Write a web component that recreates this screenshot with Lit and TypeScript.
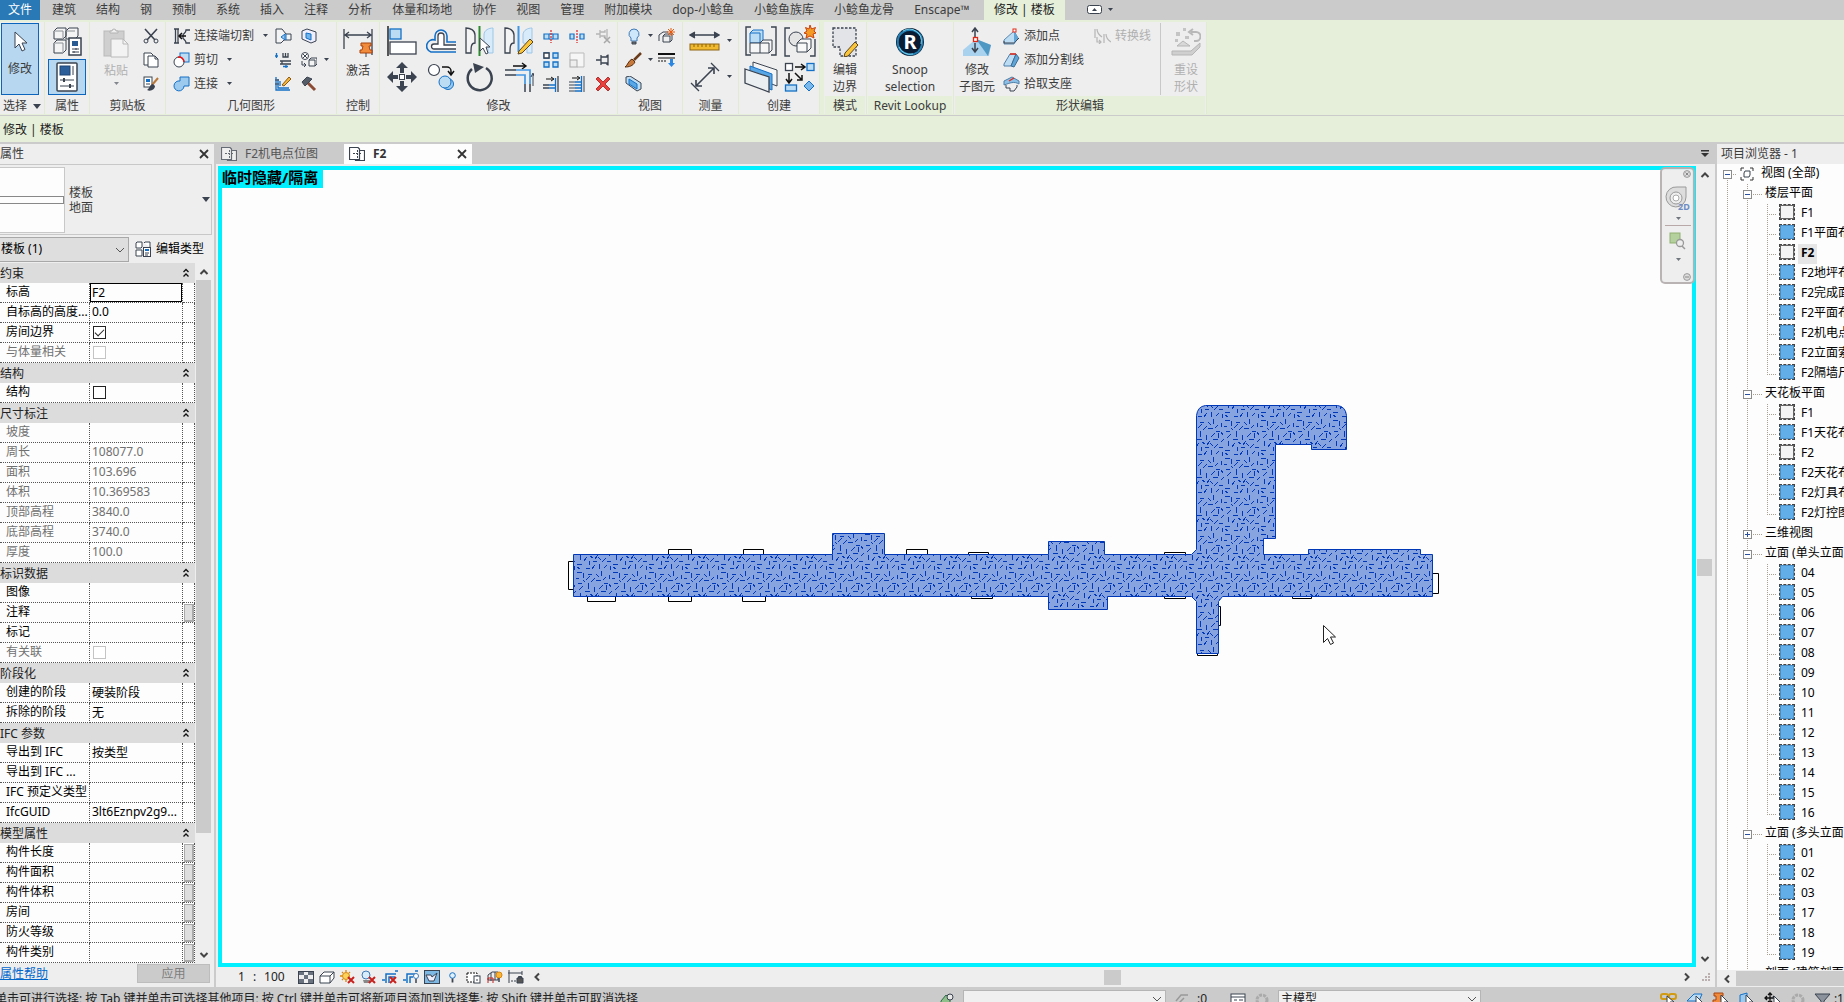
import { LitElement, html, svg, css, nothing } from "lit";
import { customElement, property } from "lit/decorators.js";
import { classMap } from "lit/directives/class-map.js";

const D = "#3b4350";
const B = "#1470c6";
const L = "#bcdcf4";

/* Icon drawings, each with its own pixel box. */
const ICONS: Record<string, [number, number, any]> = {
  cursor: [14, 22, svg`<path d="M2 1v16l4-4 3 7 3-1.500-3-6.500h5z" fill="#fff" stroke=${D}/>`],
  typeProps: [30, 30, svg`<g fill="#f4f4f4" stroke="#39424e"><path d="M2 5l3-3h9v8l-3 3H2zM14 5l3-3h9v8l-3 3h-9zM2 17l3-3h9v10l-3 3H2z"/><path d="M2 5h9v8M14 5h9M2 17h9v10" stroke="#8a8f96"/><rect x="17" y="12" width="12" height="17" fill="#fff" stroke-width="1.500"/></g><rect x="20" y="15" width="6" height="5" fill="#2a5a92"/><path d="M20 23h7M20 26h7M24 22v2M22 25v2" stroke=${D}/>`],
  props: [22, 30, svg`<rect x="1" y="1" width="20" height="28" rx="1" fill="#fff" stroke=${D} stroke-width="1.500"/><rect x="4" y="4" width="10" height="9" fill="#2c5f9a" stroke="#1e4474"/><path d="M17 4v9M4 18h14M4 24h14" stroke=${D}/><path d="M8 16v4M14 22v4" stroke=${D} stroke-width="2"/>`],
  paste: [26, 30, svg`<rect x="1" y="3" width="20" height="25" fill="#cfcfcf" stroke="#b9b9b9"/><path d="M7 5V3h2a2 2 0 0 1 4 0h2v2z" fill="#eee" stroke="#b3b3b3"/><path d="M8 11h12l5 5v13H8z" fill="#f3f3f3" stroke="#b9b9b9"/><path d="M20 11v5h5" fill="none" stroke="#b9b9b9"/>`],
  cut: [16, 16, svg`<path d="M2 1l10 11M14 1L4 12" stroke=${D} stroke-width="1.600"/><circle cx="3" cy="13" r="2" fill="none" stroke=${D}/><circle cx="13" cy="13" r="2" fill="none" stroke=${D}/>`],
  copy: [16, 16, svg`<path d="M1 1h7l2 2v10H1z" fill="#fff" stroke=${D}/><path d="M5 4h7l3 3v8H5z" fill="#fff" stroke=${D}/><path d="M12 4v3h3" fill="none" stroke=${D}/>`],
  match: [16, 16, svg`<rect x="1" y="1" width="8" height="10" fill="#fff" stroke=${D}/><rect x="3" y="3" width="4" height="3" fill=${B}/><path d="M3 8h4" stroke=${D}/><path d="M15 2l-6 7" stroke="#b9773a" stroke-width="2"/><path d="M10 8c-3 0-3 4-6 6 4 2 8-1 8-4z" fill=${D}/>`],
  cope: [17, 16, svg`<path d="M1 1h5M1 15h5M2.500 1v14M5 1v14M17 2h-4c0 3-2 3-3 5v3c1 2 3 2 3 5h4" fill="none" stroke=${D} stroke-width="1.300"/><path d="M13 8H6M9 5L6 8l3 3" fill="none" stroke="#111" stroke-width="1.500"/>`],
  cutGeo: [17, 16, svg`<rect x="7" y="1" width="9" height="9" fill=${L} stroke=${B}/><circle cx="6" cy="10" r="5" fill="#fff" stroke=${D}/><path d="M5 5.200a5 5 0 0 1 6 4.800" fill="none" stroke="#e11" stroke-width="1.500"/>`],
  join: [17, 16, svg`<path d="M7 1h9v9h-5a5 5 0 1 1-4-5z" fill="#9ccaee" stroke=${B}/>`],
  wallCope: [17, 16, svg`<path d="M1 1h6l4 5h5v6H9l-3 3H1z" fill="#f4f4f4" stroke=${D}/><path d="M11 6v6M6 9l4-3v6z" fill="#9ccaee" stroke=${B}/>`],
  splitFace: [16, 16, svg`<path d="M1 3l5-2 9 3v9l-5 2-9-4z" fill="#eef" stroke=${D}/><path d="M5 5l5 1v6l-5-2z" fill="#6fb4ea" stroke=${B}/>`],
  beam: [17, 16, svg`<path d="M8 1v4h5V1M10.500 1v4M5 9h11M5 12h11M7 9v3" fill="none" stroke=${D} stroke-width="1.300"/><path d="M1.500 1v5M0 4h3M8 14.500h5M11 13v3" stroke=${B} stroke-width="1.300"/>`],
  demolish: [16, 16, svg`<circle cx="4" cy="4" r="3.500" fill="#fff" stroke=${D}/><path d="M2 2l4 4M2 6l4-4M1 9v4h4M3 11l2 2-2 2" fill="none" stroke=${D}/><path d="M8 8l2-2h6v6l-2 2H8zM8 8h6v6" fill="#f4f4f4" stroke=${D}/>`],
  paintEdge: [17, 16, svg`<path d="M1 1v13h14M3 3v9h11M5 5v5" fill="none" stroke=${B} stroke-width="1.300"/><path d="M0 4h4M0 8h4" stroke=${D}/><path d="M7 9l7-8 2 2-7 7z" fill="#f4b53c" stroke="#8a5a10"/>`],
  hammer: [16, 16, svg`<path d="M6 6l8 8" stroke="#8c4b34" stroke-width="3"/><path d="M1 6l5-5 5 2-2 2-3 3-2 2z" fill="#555d68" stroke=${D}/>`],
  activate: [30, 30, svg`<path d="M1 1v20M29 1v26M2 7h26M6 4L2 7l4 3M24 4l4 3-4 3" fill="none" stroke=${D} stroke-width="1.300"/><path d="M18 15h10v3h-2l1 4h2v3H17v-3h2l1-4h-2z" fill="#f08a3c" stroke="#a8420e"/><path d="M23 25v4" stroke=${D}/>`],
  align: [30, 30, svg`<path d="M1 0v30" stroke="#222" stroke-width="1.500"/><rect x="3" y="3" width="11" height="10" fill=${L} stroke=${B} stroke-width="1.300"/><rect x="3" y="16" width="26" height="12" fill="#fff" stroke=${D} stroke-width="1.300"/>`],
  offset: [30, 26, svg`<path d="M30 14h-9V8a6 6 0 0 0-12 0v4a6 6 0 0 0-4 12h25" fill="none" stroke=${B} stroke-width="1.600"/><path d="M30 17H18V8a3 3 0 0 0-6 0v8H8a2.500 2.500 0 0 0 0 5h22" fill="#fff" stroke=${D} stroke-width="1.300"/>`],
  mirrorPick: [30, 30, svg`<path d="M1 2c4 0 9 2 9 7v8c-4 0-4 4-4 10H1z" fill="#f4f4f4" stroke=${D} stroke-width="1.300"/><path d="M28 2c-4 0-9 2-9 7v8c4 0 4 4 4 10h5z" fill="#d8ebfa" stroke="#9cc6e8"/><path d="M14.500 0v30" stroke="#2e8a2e" stroke-width="2"/><path d="M15 12v13l3-3 3 6 2-1-2-6h4z" fill="#fff" stroke=${D}/>`],
  mirrorDraw: [30, 30, svg`<path d="M1 2c4 0 9 2 9 7v8c-4 0-4 4-4 10H1z" fill="#f4f4f4" stroke=${D} stroke-width="1.300"/><path d="M28 2c-4 0-9 2-9 7v8c4 0 4 4 4 10h5z" fill="#d8ebfa" stroke="#9cc6e8"/><path d="M14.500 0v26" stroke="#3f96e6" stroke-width="2"/><path d="M15 25L26 13l3 3-11 11-4 1z" fill="#fbc53a" stroke="#5a4420"/>`],
  move: [30, 30, svg`<g fill=${D}><path d="M15 0l6 6h-4v5h-4V6H9zM15 30l6-6h-4v-5h-4v5H9zM0 15l6-6v4h5v4H6v4zM30 15l-6-6v4h-5v4h5v4z"/></g><rect x="12.500" y="12.500" width="5" height="5" fill="#fff" stroke=${D}/>`],
  copyObj: [28, 28, svg`<circle cx="7" cy="7" r="5.500" fill="#fff" stroke=${D} stroke-width="1.200"/><path d="M15 4h5a4 4 0 0 1 4 4v3M21 8l3 4 3-4" fill="none" stroke="#111" stroke-width="1.500"/><circle cx="21" cy="21" r="5.500" fill="#9ccaee" stroke=${B}/><circle cx="18" cy="19" r="6" fill=${L} stroke=${B}/>`],
  rotate: [28, 30, svg`<path d="M6 7a12 12 0 1 0 14-1" fill="none" stroke=${D} stroke-width="2.500"/><path d="M7 1l11 4-9 6z" fill=${D}/>`],
  trim: [30, 30, svg`<path d="M9 4h12M18 1l4 3-4 3" fill="none" stroke="#111" stroke-width="1.400"/><path d="M1 8h11M1 13h11M21 22v8M26 22v8" stroke=${D} stroke-width="1.500"/><path d="M12 8h14v14M12 13h9v9" fill="none" stroke="#3f96e6" stroke-width="1.700"/><path d="M29 24V12M27 15l2-4 1 3" stroke=${D} fill="none"/>`],
  split: [16, 14, svg`<path d="M1 5h5v5H1zM10 5h5v5h-5z" fill=${L} stroke=${B} stroke-width="1.200"/><path d="M6 5h4M6 10h4" stroke=${B}/><path d="M8 1v13" stroke="#d22" stroke-width="1.200" stroke-dasharray="2 1"/>`],
  splitGap: [16, 14, svg`<path d="M1 5h4v5H1zM11 5h4v5h-4z" fill=${L} stroke=${B} stroke-width="1.200"/><path d="M8 1v13" stroke="#d22" stroke-width="1.200" stroke-dasharray="2 1"/>`],
  unpin: [17, 16, svg`<path d="M1 6h4M5 2v8M5 4h5V2M5 8h5v2M12 1v10" fill="none" stroke="#b5b5b5" stroke-width="1.300"/><path d="M9 9l6 6M15 9l-6 6" stroke="#a8a8a8" stroke-width="1.500"/>`],
  array: [16, 16, svg`<path d="M1 1h5v5H1zM10 1h5v5h-5zM1 10h5v5H1zM10 10h5v5h-5z" fill=${L} stroke=${B} stroke-width="1.300"/><path d="M1 1h5v5H1z" fill="#fff" stroke=${D} stroke-width="1.300"/>`],
  scale: [16, 16, svg`<path d="M1 8V1h14v14H8" fill="#f6f6f6" stroke="#bbb"/><rect x="1" y="8" width="7" height="7" fill="#eee" stroke="#aaa"/>`],
  pin: [14, 14, svg`<path d="M0 7h5M5 2v10M5 4h6V2M5 10h6v2M12 1.500v11" fill="none" stroke=${D} stroke-width="1.300"/>`],
  trimOne: [16, 16, svg`<path d="M3 3h7M8 1l3 2-3 2" fill="none" stroke="#111"/><path d="M0 9h6M0 12h6M15 0v16" stroke=${D} stroke-width="1.300"/><path d="M6 9h6M6 12h6M12.500 2v14" stroke=${B} stroke-width="1.300"/>`],
  trimMany: [16, 16, svg`<path d="M3 2h7M8 0l3 2-3 2" fill="none" stroke="#111"/><path d="M0 6h6M0 9h6M0 12h6M0 15h6M15 0v16" stroke=${D}/><path d="M6 6h6M6 9h6M6 12h6M6 15h6M12.500 0v16" stroke=${B} stroke-width="1.300"/>`],
  del: [14, 14, svg`<path d="M2 0l5 5 5-5 2 2-5 5 5 5-2 2-5-5-5 5-2-2 5-5-5-5z" fill="#e8403c" stroke="#a81818" stroke-width=".8"/>`],
  bulb: [14, 17, svg`<path d="M7 1a5 5 0 0 0-3 9v3h6v-3a5 5 0 0 0-3-9z" fill="#cfe7fb" stroke="#3f7ab6"/><path d="M5 14h4v2H5z" fill="#777" stroke=${D}/>`],
  hideBox: [17, 16, svg`<path d="M1 7l4-3h5M1 7v6M5 8h7v6H5zM5 8l2-2h7v6l-2 2" fill="#eee" stroke=${D}/><path d="M13 0v8M9 4h8M10 1l6 6M16 1l-6 6" stroke="#e8590c"/>`],
  brush: [17, 16, svg`<path d="M16 1L9 8" stroke="#6a3c1c" stroke-width="2.500"/><path d="M7 7l3 3c-2 4-6 5-10 5 3-2 3-6 7-8z" fill="#c87a3c" stroke="#5a3010"/>`],
  lines: [17, 16, svg`<path d="M0 2h17" stroke="#111" stroke-width="2"/><path d="M0 6h17" stroke="#111"/><path d="M0 9h9" stroke="#111" stroke-dasharray="2 1"/><path d="M12 7h3v4h2l-3.500 4L10 11h2z" fill="#2a86e0"/>`],
  section: [17, 16, svg`<path d="M1 1l4-1 11 7v6l-4 2L1 7z" fill=${L} stroke=${D}/><path d="M4 3l8 5v5L4 8z" fill="#5aa7e6" stroke=${B}/>`],
  measure: [31, 22, svg`<path d="M2 5h27M6 2L1 5l5 3M25 2l5 3-5 3" fill=${D} stroke=${D} stroke-width="1.400"/><rect x="1" y="14" width="29" height="6" fill="#f0b92e" stroke="#8d6512"/><path d="M5 14v3M9 14v3M13 14v3M17 14v3M21 14v3M25 14v3" stroke="#8d6512"/>`],
  dim: [30, 30, svg`<path d="M6 24L24 6M6 18v6h6M18 6h6v6" fill="none" stroke=${D} stroke-width="1.600"/><path d="M1 21l8 8M21 1l8 8" stroke=${D} stroke-width="1.300"/>`],
  group: [32, 30, svg`<path d="M6 1H1v28h5M26 1h5v28h-5" fill="none" stroke=${D} stroke-width="1.400"/><path d="M5 7l3-3h10v10l-3 3H5zM5 7h10v10" fill=${L} stroke=${B}/><path d="M5 17h10v10H5zM15 17l3-3h9v10l-3 3h-9M15 17h9v10" fill="#f6f6f6" stroke=${D}/>`],
  assembly: [32, 32, svg`<path d="M6 3H1v28h5M26 31h5V14" fill="none" stroke=${D} stroke-width="1.400"/><circle cx="12" cy="14" r="7" fill="#e4e4e4" stroke=${D}/><path d="M13 18l4-4h10v9l-4 4H13zM13 18h10v9" fill="#f8f8f8" stroke=${D}/><path d="M26 0l1.500 4 4-1.500L30 6l2 2-3 1 1 4-4-2-4 2 1-4-3-1 3-2-1.500-3.500L25 4z" fill="#f39b24" stroke="#c8400c"/>`],
  parts: [34, 32, svg`<path d="M9 1l24 8v16L9 16z" fill="#f4f4f4" stroke=${D}/><path d="M6 5l22 8v16L6 20z" fill="#5aa7e6" stroke=${B}/><path d="M1 8l24 8v15L1 22z" fill="#eceff2" stroke=${D} stroke-width="1.300"/>`],
  similar: [32, 30, svg`<rect x="1.500" y="1.500" width="7" height="7" fill="#fff" stroke=${D} stroke-width="1.300"/><rect x="23" y="1.500" width="7" height="7" fill=${L} stroke=${B} stroke-width="1.300"/><rect x="1.500" y="23" width="11" height="6" fill=${L} stroke=${B} stroke-width="1.300"/><path d="M25 19l5 5-5 5-5-5z" fill="#7ab8ec" stroke=${B}/><path d="M11 5h9M17 2l4 3-4 3M5 11v9M2 17l3 4 3-4M11 11l7 7M18 13v5h-5" fill="none" stroke="#111" stroke-width="1.500"/>`],
  boundary: [27, 30, svg`<path d="M1 1h23v28H8v-9H1z" fill="#e2e4e8" stroke=${D} stroke-width="1.300" stroke-dasharray="2.500 1.500"/><path d="M13 26L23 15l3 3-10 11-4 1z" fill="#fbc53a" stroke="#5a4420"/>`],
  lookup: [30, 30, svg`<circle cx="15" cy="15" r="14" fill="#0a1c34"/><path d="M4 9a13 13 0 0 1 22 0M3 18a13 13 0 0 0 20 7M6 6a14 14 0 0 0 1 19M26 9a14 14 0 0 1-3 16" fill="none" stroke="#2380b4" stroke-width="2"/><path d="M8 4a12 12 0 0 1 18 13M4 20a12 12 0 0 0 14 7" fill="none" stroke="#7cd2ea" stroke-width="1"/><text x="15" y="22" text-anchor="middle" font-family="Noto Sans" font-weight="700" font-size="20" fill="#fff">R</text>`],
  subEl: [30, 30, svg`<path d="M1 23L14 12l15 6-2 11H1z" fill="#a9d2ef"/><path d="M14 12l15 6-3 11z" fill="#4f98c4"/><path d="M13 10V2M10 5l3-4 3 4M13 16v8M10 21l3 4 3-4" fill="none" stroke=${D} stroke-width="1.500"/><rect x="11.500" y="10.500" width="4" height="4" fill="#fff" stroke="#e02818" stroke-width="1.300"/>`],
  addPoint: [17, 17, svg`<path d="M1 12L11 3l4 7-4 6H1z" fill=${L} stroke="#5b88ad"/><path d="M1 13v2h10l5-5" fill="none" stroke=${D}/><path d="M11 3l4 7-4 5z" fill="#5fa5d8"/><rect x="10" y="1" width="3" height="3" fill="#fff" stroke="#e02818"/>`],
  addSplit: [17, 16, svg`<path d="M1 12L7 2h6L8 14H1z" fill=${L} stroke="#4f7fa8"/><path d="M8 14L13 2l3 4-5 9z" fill="#5fa5d8" stroke="#3b6c94"/><path d="M7 2h6" stroke="#e02818" stroke-width="1.500"/>`],
  pickSupport: [17, 16, svg`<path d="M1 5l8-4 7 4v3c-5-3-9-1-15 1z" fill="#8cc0e6" stroke="#4f7fa8"/><path d="M3 9v3h4v3h4l3-4V9" fill="#eee" stroke=${D}/><path d="M6 5l5-3" stroke="#e02818" stroke-width="1.300"/>`],
  convert: [17, 16, svg`<path d="M1 1v9M3 1c0 4 2 6 5 8M3 9v5h4M5 12l2 2-2 2M10 6v9M12 6c0 4 2 6 5 8" fill="none" stroke="#b5b5b5" stroke-width="1.200"/>`],
  reset: [30, 30, svg`<path d="M1 24h19l9-8v4l-8 8H1z" fill="#cfcfcf" stroke="#b5b5b5"/><path d="M6 19l6-5 7 5z" fill="#d8d8d8" stroke="#b5b5b5"/><path d="M20 5h5a4 4 0 0 1 0 9h-2M22 2l-4 3 4 3" fill="none" stroke="#b8b8b8" stroke-width="2"/><path d="M5 5h4v4H5zM12 1h3v3h-3zM14 9h4v3h-4zM4 12h3v3H4z" fill="#c4c4c4"/>`],
  expand: [16, 10, svg`<rect x=".5" y=".5" width="14" height="8" rx="2" fill="#fff" stroke=${D}/><path d="M5 6l2.500-3L10 6z" fill=${D}/>`],
  sheet: [16, 14, svg`<path d="M.5 12.500V.5H9L10.500 2v10.500zM10.500 3.500H15.500v10H6.500v-1" fill="#fff" stroke=${D} stroke-width="1.200"/><path d="M4 6.500h9" stroke=${D} stroke-dasharray="2 1"/><path d="M8.500 3v8" stroke=${D} stroke-dasharray="2 1"/>`],
  typeSmall: [16, 16, svg`<path d="M1 2l1-1h5v5L6 7H1zM9 2l1-1h5v5M1 9h6v6H1z" fill="#fff" stroke=${D}/><rect x="8.500" y="6.500" width="7" height="9" fill="#fff" stroke=${D}/><path d="M10 8h4v2h-4z" fill=${B}/><path d="M10 12h4M10 14h3" stroke=${D}/>`],
  close: [12, 12, svg`<path d="M2 2l8 8M10 2l-8 8" stroke="#333" stroke-width="1.800"/>`],
  up: [10, 10, svg`<path d="M1.500 7L5 3.500 8.500 7" fill="none" stroke="#444" stroke-width="2"/>`],
  down: [10, 10, svg`<path d="M1.500 3L5 6.500 8.500 3" fill="none" stroke="#444" stroke-width="2"/>`],
  chev: [10, 10, svg`<path d="M1 3l4 4 4-4" fill="none" stroke="#555" stroke-width="1"/>`],
  left: [10, 10, svg`<path d="M7 1.500L3.500 5 7 8.500" fill="none" stroke="#444" stroke-width="2"/>`],
  right: [10, 10, svg`<path d="M3 1.500L6.500 5 3 8.500" fill="none" stroke="#444" stroke-width="2"/>`],
  tri: [6, 4, svg`<path d="M1 0h5L3.500 3z" fill=${D}/>`],
  triBig: [8, 5, svg`<path d="M0 0h8L4 5z" fill=${D}/>`],
  tabMenu: [8, 8, svg`<path d="M0 0h8v1.500H0zM0 3h8L4 7z" fill="#333"/>`],
  dbl: [6, 10, svg`<path d="M.5 4L3 1.500 5.500 4M.5 8.500L3 6l2.500 2.500" fill="none" stroke="#111" stroke-width="1.300"/>`],
  wheel: [26, 26, svg`<path d="M12 1h9v10a10 10 0 1 1-9-10z" fill="#ddd" stroke="#999"/><circle cx="11" cy="12" r="6" fill="#eee" stroke="#999"/><circle cx="11" cy="12" r="3" fill="#fff" stroke="#aaa"/><text x="13" y="24" font-family="Noto Sans" font-weight="700" font-size="9" fill="#6c8cc4">2D</text>`],
  zoomBox: [17, 18, svg`<rect x="1" y="1" width="10" height="10" fill="#b4d09c" stroke="#8fb070"/><circle cx="11" cy="11" r="3.500" fill="#eee" stroke="#999" stroke-width="1.300"/><path d="M13 14l3 3" stroke="#999" stroke-width="1.500"/>`],
  navX: [8, 8, svg`<circle cx="4" cy="4" r="3.400" fill="#ddd" stroke="#999"/><path d="M2.500 2.500l3 3M5.500 2.500l-3 3" stroke="#888"/>`],
  navM: [8, 8, svg`<circle cx="4" cy="4" r="3.400" fill="#ddd" stroke="#999"/><path d="M2 4h4" stroke="#888"/>`],
  views: [14, 14, svg`<path d="M1 4V1h3M10 1h3v3M13 10v3h-3M4 13H1v-3" fill="none" stroke="#333"/><path d="M4 6l1-2h5v4l-1 2H4z" fill="#fff" stroke=${D}/>`],
  detail: [16, 13, svg`<rect x=".5" y=".5" width="15" height="12" fill="#eee" stroke=${D}/><path d="M1 1h5v3H1zM10 1h5v3h-5zM6 4h4v4H6zM1 8h5v4H1zM10 8h5v4h-5z" fill="#6a7280"/>`],
  cube: [16, 13, svg`<path d="M1 5l4-4h10v6l-4 5H1zM1 5h10v7M11 5l4-4" fill="#fff" stroke=${D}/>`],
  sunOff: [16, 14, svg`<circle cx="6" cy="6" r="3.500" fill="#fbd25a" stroke="#d8860c"/><path d="M6 0v2M6 10v2M0 6h2M2 2l1 1M10 2L9 3M2 10l1-1" stroke="#d8860c" stroke-width="1.300"/><path d="M8 7l6 6M14 7l-6 6" stroke="#c8201c" stroke-width="2"/>`],
  shadowOff: [15, 14, svg`<circle cx="5" cy="5" r="4" fill="#d8ecfa" stroke="#3f7ab6"/><path d="M2 10h7v3H3z" fill="#888"/><path d="M8 7l6 6M14 7l-6 6" stroke="#c8201c" stroke-width="2"/>`],
  cropOff: [16, 14, svg`<path d="M4 13V4h10M0 10h3M13 1h3M7 13V7h6" fill="none" stroke=${B} stroke-width="1.500"/><path d="M8 7l6 6M14 7l-6 6" stroke="#c8201c" stroke-width="2"/>`],
  cropShow: [16, 14, svg`<path d="M4 13V4h8M0 10h3M12 1h3M7 13V7h3" fill="none" stroke=${B} stroke-width="1.500"/><circle cx="13" cy="6" r="2.500" fill="#fff" stroke="#3f7ab6"/><path d="M13 9v4" stroke=${D} stroke-width="1.500"/>`],
  glasses: [16, 14, svg`<rect x=".5" y=".5" width="15" height="13" fill="#7db8e4" stroke=${D}/><path d="M2 5h5l1 2 5-4-3 8H5z" fill="#eef" stroke=${D}/>`],
  bulbSmall: [7, 11, svg`<circle cx="3.500" cy="3.500" r="2.800" fill="#e0f0fc" stroke=${B}/><path d="M3.500 6.500v4" stroke=${D} stroke-width="1.800"/>`],
  tempProps: [15, 13, svg`<path d="M1 2h10v9H1z" fill="#fff" stroke="#111" stroke-dasharray="2 1"/><rect x="8" y="5" width="6" height="7" fill="#fff" stroke=${D}/><path d="M10 9h2" stroke=${D}/>`],
  analytic: [16, 14, svg`<path d="M1 5l4-3h6v8H1zM4 3v8M8 2v8" fill="#eee" stroke=${D}/><path d="M1 13V8h5v5" fill="none" stroke="#c8201c"/><circle cx="12" cy="5" r="3" fill="#f9b53a" stroke="#d8860c"/><path d="M12 8v4" stroke=${D} stroke-width="1.500"/>`],
  constraints: [16, 14, svg`<path d="M1 0v13M0 3h14M14 1v4" stroke=${D}/><path d="M3 11h5" stroke=${D} stroke-dasharray="2 1"/><path d="M9 8h6v5H9zM10.500 8V6.500h3V8" fill="#555" stroke=${D}/>`],
  grip: [10, 10, svg`<path d="M7 1h2v2H7zM4 4h2v2H4zM7 4h2v2H7zM1 7h2v2H1zM4 7h2v2H4zM7 7h2v2H7z" fill="#bbb0b0"/>`],
  link: [18, 14, svg`<rect x="1" y="2" width="7" height="5" rx="2" fill="none" stroke="#d19a10" stroke-width="2"/><rect x="9" y="2" width="7" height="5" rx="2" fill="none" stroke="#d19a10" stroke-width="2"/><path d="M7 4v9l3-3h4z" fill="#fff" stroke=${D}/>`],
  selUnder: [18, 14, svg`<path d="M1 9l7-7h8l-3 7z" fill=${L} stroke=${B}/><path d="M10 4v10l3-3h4z" fill="#fff" stroke=${D}/>`],
  selPin: [18, 14, svg`<path d="M2 1h9v3H9v4h3v3H1V8h3V4H2z" fill="#f08a3c" stroke="#a8420e"/><path d="M9 3v10l3-3h4z" fill="#fff" stroke=${D}/>`],
  selFace: [18, 14, svg`<path d="M2 3l7-2v11H2z" fill="#9ccaee" stroke=${B}/><path d="M8 3v10l3-3h4z" fill="#fff" stroke=${D}/>`],
  drag: [18, 14, svg`<path d="M6 1v10M1 6h10M4 3l2-2 2 2M4 9l2 2 2-2M3 4L1 6l2 2M9 4l2 2" fill="none" stroke="#111" stroke-width="1.300"/><path d="M10 4v10l3-3h4z" fill="#fff" stroke=${D}/>`],
  gear: [16, 14, svg`<circle cx="8" cy="8" r="5" fill="none" stroke="#aaa" stroke-width="3" stroke-dasharray="3 1"/>`],
  filter: [18, 14, svg`<path d="M1 2h15l-6 7v6H7V9z" fill="#8b929c" stroke=${D}/>`],
  worksets: [16, 14, svg`<path d="M2 9l5-6 4 4v6H2z" fill="#8fc08a" stroke="#2e6a4a"/><circle cx="11" cy="5" r="3" fill="#e8e8e8" stroke=${D}/>`],
  editReq: [14, 14, svg`<path d="M1 9l5-6h7M3 12l6-6" stroke="#999" stroke-width="1.500" fill="none"/>`],
  optSheet: [16, 14, svg`<rect x="1" y="2" width="14" height="12" fill="#fff" stroke=${D}/><path d="M1 5h14M4 8h3M4 11h3M9 8h4M9 11h4" stroke=${D}/>`],
};

const icon = (name: string) => {
  const [w, h, body] = ICONS[name];
  return html`<svg class="ic" width=${w} height=${h} viewBox="0 0 ${w} ${h}" aria-hidden="true">${body}</svg>`;
};

const TABS = ["建筑", "结构", "钢", "预制", "系统", "插入", "注释", "分析", "体量和场地", "协作", "视图", "管理", "附加模块", "dop-小鲶鱼", "小鲶鱼族库", "小鲶鱼龙骨", "Enscape™"];

const base = css`
  * { box-sizing: border-box; }
  button, input, select { font: inherit; color: inherit; margin: 0; padding: 0; border: 0; background: none; border-radius: 0; }
  button { display: flex; align-items: center; justify-content: center; white-space: nowrap; }
  .ic { display: block; flex: none; }
`;

@customElement("app-ribbon")
class AppRibbon extends LitElement {
  static styles = [base, css`
    :host { display: block; color: #3c3c3c; }
    .tabs { display: flex; height: 20px; background: #cbcbcb; }
    .tab { padding: 0 10px; height: 20px; line-height: 20px; }
    .tab.file { background: #2879b5; color: #fff; width: 40px; padding: 0; margin-right: 2px; }
    .tab.active { background: #e5efd9; padding: 0 10px; margin: 0 22px 0 4px; color: #222; }
    .toggle { gap: 4px; }
    .panels { display: flex; background: #e5efd9; padding-top: 2px; border-bottom: 1px solid #cbcbcb; height: 96px; }
    .panel { display: flex; flex-direction: column; flex: none; background: #eee; border-right: 1px solid #dfeccf; padding-top: 1px; height: 92px; }
    .panel.last { margin-right: 4px; }
    .body { display: flex; height: 72px; flex: none; }
    .label { flex: 1; line-height: 20px; padding-top: 1px; text-align: center; display: flex; justify-content: center; align-items: center; gap: 6px; }
    .ctx .label { background: #e5efd9; margin: 1px 1px 0; line-height: 18px; }
    .big { flex-direction: column; justify-content: flex-start; line-height: 17px; width: 40px; height: 72px; }
    .pic { height: 39px; display: flex; align-items: center; justify-content: center; }
    .off { color: #b0b0b0; }
    .off .arrow { opacity: 0.6; }
    .arrow { height: 10px; display: flex; align-items: center; }
    .pressed { background: #b6d7ef; border: 1px solid #0b65bd; }
    .modify { width: 38px; margin-left: 1px; }
    .modify .pic { height: 36px; }
    .col { display: flex; flex-direction: column; align-items: center; width: 43px; }
    .col button { width: 38px; height: 36px; }
    .small { display: grid; grid-auto-flow: column; grid-template-rows: repeat(3, 24px); grid-auto-columns: 25px; padding-top: 1px; height: 72px; }
    .large { display: grid; grid-auto-flow: column; grid-template-rows: repeat(2, 36px); grid-auto-columns: 39px; }
    .narrow { grid-auto-columns: 10px; }
    .text { justify-content: flex-start; gap: 4px; }
    .text .drop { margin-left: 4px; }
    .wsel { width: 45px; } .wprop { width: 45px; } .wclip { width: 76px; } .wclip .body { padding-left: 6px; gap: 2px; }
    .wgeo { width: 171px; } .wgeo .body { padding-left: 7px; } .wgeo .first { grid-auto-columns: 98px; }
    .wctl { width: 43px; } .wctl .body, .center .body { justify-content: center; }
    .wmod { width: 238px; } .wmod .body { padding-left: 2px; } .wmod .small { grid-auto-columns: 26px; }
    .wview { width: 65px; } .wview .body { padding-left: 3px; }
    .wview .narrow { grid-auto-columns: 8px; }
    .wmeas { width: 56px; } .wmeas .body { padding-left: 2px; }
    .wcreate { width: 81px; } .wcreate .body { padding-left: 2px; }
    .wmode { width: 43px; } .wlook { width: 87px; } .wlook .big { width: 60px; }
    .wshape { width: 253px; } .wshape .body { padding-left: 3px; }
    .wshape .small { grid-auto-columns: auto; padding-left: 6px; width: 91px; }
    .wshape .conv { width: 73px; border-right: 1px solid #c8c8c8; margin-right: 5px; }
    .options { height: 26px; background: #e5efd9; padding-left: 3px; line-height: 27px; color: #222; }
    .edge { height: 2px; background: #cbcbcb; }
  `];

  big(pic: string, lines: string[], cls = "") {
    return html`<button class="big ${cls}"><span class="pic">${icon(pic)}</span>${lines.map(l => html`<span>${l}</span>`)}${cls.includes("menu") ? html`<span class="arrow">${icon("tri")}</span>` : nothing}</button>`;
  }
  btn(pic: string, title: string) { return html`<button aria-label=${title}>${icon(pic)}</button>`; }
  txt(pic: string, label: string, drop = false, cls = "") {
    return html`<button class="text ${cls}">${icon(pic)}<span>${label}</span>${drop ? html`<span class="drop">${icon("tri")}</span>` : nothing}</button>`;
  }
  gap() { return html`<span></span>`; }
  panel(cls: string, label: any, body: any) {
    return html`<section class="panel ${cls}"><div class="body">${body}</div><div class="label">${label}</div></section>`;
  }

  render() {
    return html`
      <nav class="tabs">
        <button class="tab file">文件</button>
        ${TABS.map(t => html`<button class="tab">${t}</button>`)}
        <button class="tab active">修改 | 楼板</button>
        <button class="toggle" aria-label="最小化">${icon("expand")}${icon("tri")}</button>
      </nav>
      <div class="panels">
        ${this.panel("wsel", html`选择 ${icon("triBig")}`, this.big("cursor", ["修改"], "pressed modify"))}
        ${this.panel("wprop", "属性", html`<div class="col"><button aria-label="类型属性">${icon("typeProps")}</button><button class="pressed" aria-label="属性">${icon("props")}</button></div>`)}
        ${this.panel("wclip", "剪贴板", html`${this.big("paste", ["粘贴"], "off menu")}
          <div class="small">${this.btn("cut", "剪切")}${this.btn("copy", "复制")}${this.btn("match", "匹配")}</div>`)}
        ${this.panel("wgeo", "几何图形", html`
          <div class="small first">${this.txt("cope", "连接端切割", true)}${this.txt("cutGeo", "剪切", true)}${this.txt("join", "连接", true)}</div>
          <div class="small">${this.btn("wallCope", "墙连接")}${this.btn("beam", "梁连接")}${this.btn("paintEdge", "填色")}${this.btn("splitFace", "拆分面")}${this.btn("demolish", "连接件")}${this.btn("hammer", "拆除")}</div>
          <div class="small narrow">${this.gap()}${this.btn("tri", "更多")}</div>`)}
        ${this.panel("wctl", "控制", this.big("activate", ["激活"]))}
        ${this.panel("wmod", "修改", html`
          <div class="large">${["align", "move", "offset", "copyObj", "mirrorPick", "rotate", "mirrorDraw", "trim"].map(n => this.btn(n, n))}</div>
          <div class="small">${["split", "array", "trimOne", "splitGap", "scale", "trimMany", "unpin", "pin", "del"].map(n => this.btn(n, n))}</div>`)}
        ${this.panel("wview", "视图", html`
          <div class="small">${["bulb", "brush", "section"].map(n => this.btn(n, n))}</div>
          <div class="small narrow">${this.btn("tri", "显隐菜单")}${this.btn("tri", "图形菜单")}</div>
          <div class="small">${["hideBox", "lines"].map(n => this.btn(n, n))}</div>`)}
        ${this.panel("wmeas", "测量", html`
          <div class="large">${["measure", "dim"].map(n => this.btn(n, n))}</div>
          <div class="large narrow">${this.btn("tri", "测量菜单")}${this.btn("tri", "标注菜单")}</div>`)}
        ${this.panel("wcreate last", "创建", html`
          <div class="large">${["group", "parts", "assembly", "similar"].map(n => this.btn(n, n))}</div>`)}
        ${this.panel("wmode ctx center", "模式", this.big("boundary", ["编辑", "边界"]))}
        ${this.panel("wlook ctx center", "Revit Lookup", this.big("lookup", ["Snoop", "selection"]))}
        ${this.panel("wshape ctx", "形状编辑", html`${this.big("subEl", ["修改", "子图元"])}
          <div class="small">${this.txt("addPoint", "添加点")}${this.txt("addSplit", "添加分割线")}${this.txt("pickSupport", "拾取支座")}</div>
          <div class="small conv">${this.txt("convert", "转换线", false, "off")}</div>
          ${this.big("reset", ["重设", "形状"], "off")}`)}
      </div>
      <div class="options">修改 | 楼板</div>
      <div class="edge"></div>`;
  }
}

type Row = { n: string; v?: string; check?: boolean; off?: boolean; btn?: boolean; focus?: boolean };
const PROPS: [string, Row[]][] = [
  ["约束", [{ n: "标高", v: "F2", focus: true }, { n: "自标高的高度...", v: "0.0" }, { n: "房间边界", check: true }, { n: "与体量相关", check: false, off: true }]],
  ["结构", [{ n: "结构", check: false }]],
  ["尺寸标注", [{ n: "坡度", v: "", off: true }, { n: "周长", v: "108077.0", off: true }, { n: "面积", v: "103.696", off: true }, { n: "体积", v: "10.369583", off: true }, { n: "顶部高程", v: "3840.0", off: true }, { n: "底部高程", v: "3740.0", off: true }, { n: "厚度", v: "100.0", off: true }]],
  ["标识数据", [{ n: "图像", v: "" }, { n: "注释", v: "", btn: true }, { n: "标记", v: "" }, { n: "有关联", check: false, off: true }]],
  ["阶段化", [{ n: "创建的阶段", v: "硬装阶段" }, { n: "拆除的阶段", v: "无" }]],
  ["IFC 参数", [{ n: "导出到 IFC", v: "按类型" }, { n: "导出到 IFC ...", v: "" }, { n: "IFC 预定义类型", v: "" }, { n: "IfcGUID", v: "3lt6Eznpv2g9..." }]],
  ["模型属性", ["构件长度", "构件面积", "构件体积", "房间", "防火等级", "构件类别"].map(n => ({ n, v: "", btn: true }))],
];

@customElement("app-properties")
class AppProperties extends LitElement {
  static styles = [base, css`
    :host { display: flex; flex-direction: column; width: 216px; background: #eee; border-right: 2px solid #cbcbcb; color: #000; min-height: 0; overflow: hidden; }
    .title { display: flex; justify-content: space-between; align-items: center; height: 20px; padding-right: 4px; color: #3c3c3c; flex: none; }
    .type { display: flex; align-items: center; height: 71px; border: 1px solid #c8c8c8; border-left: 0; margin-right: 2px; padding-right: 1px; color: #3c3c3c; flex: none; }
    .preview { width: 65px; height: 66px; border: 1px solid #c8c8c8; border-left: 0; background: #fdfdfd; display: flex; align-items: center; }
    .slab { width: 64px; height: 8px; border: 1px solid #888; border-left: 0; }
    .names { flex: 1; line-height: 15px; padding-left: 4px; }
    .filter { display: flex; align-items: center; height: 28px; gap: 6px; flex: none; }
    .pick { position: relative; width: 129px; height: 25px; }
    select { width: 100%; height: 100%; appearance: none; background: #dedede; border: 1px solid #a8a8a8; border-left: 0; padding-left: 1px; }
    .pick .ic { position: absolute; right: 4px; top: 8px; pointer-events: none; }
    .edit { gap: 5px; height: 24px; line-height: 22px; }
    .scroll { display: flex; flex: 1; min-height: 0; overflow: hidden; }
    table { width: 195px; table-layout: fixed; border-collapse: separate; border-spacing: 0; background: #fdfdfd; line-height: 17px; align-self: flex-start; }
    th, td { padding: 0; height: 20px; font-weight: 400; text-align: left; white-space: nowrap; overflow: hidden; }
    .group { background: #dcdcdc; color: #222; }
    .head { display: flex; justify-content: space-between; align-items: center; padding-right: 6px; height: 20px; }
    .name, td { border-bottom: 1px dotted #555; border-right: 1px dotted #555; }
    .name { padding-left: 6px; vertical-align: top; }
    .val input[type="text"] { width: 100%; height: 19px; display: block; padding: 0 0 2px 2px; outline: 0; text-overflow: ellipsis; border: 0 solid #000; }
    .val input.focus { border-width: 1px; padding: 0 0 1px 1px; }
    input[type="checkbox"] { appearance: none; width: 13px; height: 13px; border: 1px solid #222; background: #fff; margin-left: 3px; display: grid; place-items: center; }
    input[type="checkbox"]:checked::before { content: ""; width: 8px; height: 4px; border: solid #222; border-width: 0 0 1px 1px; transform: translateY(-1px) rotate(-45deg); }
    .off { color: #707070; }
    .off input[type="checkbox"] { border-color: #c4c4c4; }
    .more { width: 10px; height: 18px; margin-left: 1px; background: #dedede; border: 1px solid #aaa; border-right-width: 2px; border-bottom-width: 2px; }
    .bar { width: 15px; margin-left: 1px; display: flex; flex-direction: column; align-items: center; }
    .bar button { height: 17px; }
    .thumb { width: 15px; flex: 552; background: #cbcbcb; }
    .rest { flex: 113; }
    .foot { display: flex; justify-content: space-between; align-items: center; height: 24px; padding: 0 4px 3px 0; flex: none; }
    a { color: #0066cc; }
    .apply { width: 73px; height: 19px; background: #cbcbcb; border: 1px solid #bdbdbd; color: #7d7d7d; }
  `];
  @property({ type: Array }) groups = PROPS;

  row(r: Row, id: string) {
    return html`<tr class=${classMap({ off: !!r.off })}>
      <th class="name" scope="row"><label for=${id}>${r.n}</label></th>
      <td class="val">${r.check !== undefined
        ? html`<input id=${id} type="checkbox" .checked=${r.check} ?disabled=${r.off}>`
        : html`<input id=${id} type="text" class=${classMap({ focus: !!r.focus })} .value=${r.v ?? ""} ?readonly=${r.off}>`}</td>
      <td>${r.btn ? html`<button class="more" aria-label="浏览"></button>` : nothing}</td></tr>`;
  }
  render() {
    return html`
      <div class="title"><span>属性</span><button aria-label="关闭">${icon("close")}</button></div>
      <div class="type"><div class="preview"><div class="slab"></div></div><div class="names">楼板<br>地面</div><button aria-label="类型">${icon("triBig")}</button></div>
      <div class="filter"><div class="pick"><select aria-label="过滤器"><option>楼板 (1)</option></select>${icon("chev")}</div>
        <button class="edit">${icon("typeSmall")}<span>编辑类型</span></button></div>
      <div class="scroll">
        <table><colgroup><col style="width:90px"><col style="width:93px"><col style="width:12px"></colgroup>
          ${this.groups.map(([g, rows], i) => html`<tbody>
            <tr><th class="group" colspan="3"><div class="head"><span>${g}</span><button aria-label="折叠">${icon("dbl")}</button></div></th></tr>
            ${rows.map((r, j) => this.row(r, `p${i}-${j}`))}</tbody>`)}
        </table>
        <div class="bar"><button aria-label="向上">${icon("up")}</button><div class="thumb"></div><div class="rest"></div><button aria-label="向下">${icon("down")}</button></div>
      </div>
      <div class="foot"><a href="#help">属性帮助</a><button class="apply" disabled>应用</button></div>`;
  }
}

const BOXES = [
  "M573 561.500h-4.500v28h4.500", "M668.500 554v-4.500h23v4.500", "M743.500 554v-4.500h20v4.500", "M906.500 554v-4.500h21v4.500",
  "M968.500 554v-1.500h20v1.500", "M587.500 597v4.500h28v-4.500", "M668.500 597v4.500h23v-4.500", "M742.500 597v4.500h23v-4.500",
  "M971.500 597v1.500h21v-1.500", "M1164.500 554v-1.500h21v1.500", "M1164.500 597v1.500h21v-1.500", "M1292.500 597v1.500h19v-1.500",
  "M1433 573.500h5.500v20h-5.500", "M1219 606.500h1.500v19h-1.500", "M1197.500 654v1.500h20v-1.500",
];
const FLOOR = "M573.500 554.500H832.500V533.500H884.500V554.500H1048.500V541.500H1104.500V554.500H1191.500L1196.500 549.500V415.500Q1197.500 406.500 1205.500 405.500H1337.500Q1345.500 406.500 1346.500 415.500V449.500H1311.500V444.500H1275.500V538.500H1263.500V554.500H1308.500V549.500H1420.500V554.500H1432.500V596.500H1222.500L1218.500 601.500V653.500H1196.500V601.500L1191.500 596.500H1107.500V609.500H1048.500V596.500H573.500Z";
const HATCH = "M1 2.500h5M12 4.500h4M20 10.500h5M28 13.500h4M2 13.500h4M9 21.500h5M25 21.500h5M17 29.500h4M1 32.500h5M31 29.500h4M10 36.500h4M7.500 3v5M25.500 1v5M33.500 5v4M12.500 13v6M30.500 15v5M18.500 17v5M4.500 23v5M23.500 32v5M34.500 34v4M13.500 29v4M10 10l4-4M15 12l4-4M27 10l3-3M0 9l3-1M20 4l3 3M3 20l4-4M23 19l4-4M33 24l3-3M8 29l3-4M19 27l3-4M26 30l4-4M16 37l3-4M28 36l3-3M33 14l2 3M14 24l3 2M1 35l3 2M7 10l2 2M22 25l3 3";

@customElement("app-view")
class AppView extends LitElement {
  static styles = [base, css`
    :host { display: flex; flex-direction: column; min-width: 0; background: #eee; color: #222; }
    .tabs { display: flex; height: 20px; background: #cbcbcb; flex: none; }
    .tab { display: flex; align-items: center; width: 128px; padding: 0 4px 0 5px; color: #555; }
    .tab .ic { opacity: 0.7; }
    .tab.on { background: #fdfdfd; color: #333; font-weight: 700; }
    .tab.on .ic { opacity: 1; }
    .tab .x { margin-left: auto; }
    .tab button { font-weight: inherit; gap: 8px; }
    .menu { margin: 0 6px 0 auto; }
    .stage { flex: 1; display: flex; min-height: 0; padding: 2px 0 0 2px; }
    .canvas { position: relative; flex: 1; min-width: 0; border: 4px solid #00f0ff; background: #fdfdfd; overflow: hidden; }
    .plan { display: block; width: 100%; height: 100%; }
    .badge { position: absolute; left: -3px; top: -2px; background: #00f0ff; color: #000; font-size: 15px; font-weight: 700; line-height: 18px; padding: 0 5px 2px 3px; white-space: nowrap; }
    .wrap { position: relative; flex: 1; display: flex; min-width: 0; }
    .nav { position: absolute; right: 1px; top: 1px; width: 35px; height: 117px; border: 2px solid rgba(150,140,140,.6); border-radius: 5px; background: rgba(236,236,236,.9); display: flex; flex-direction: column; align-items: center; }
    .nav .end { align-self: flex-end; margin: 1px 2px 0; }
    .nav .w { margin-top: 8px; }
    .nav .t { margin-top: 5px; opacity: .7; }
    .nav hr { width: 26px; border: 0; border-top: 1px solid #b9a8a8; margin: 4px 0 6px; }
    .nav .t2 { margin-top: 8px; flex: none; opacity: .7; }
    .nav .b { margin-top: 11px; }
    .vbar { width: 15px; margin: 0 3px 0 1px; display: flex; flex-direction: column; align-items: center; }
    .vbar button { width: 15px; height: 17px; }
    .above { flex: 376; } .below { flex: 375; }
    .knob { width: 15px; height: 17px; background: #cbcbcb; }
    .hbar { display: flex; align-items: center; height: 20px; flex: none; padding: 0 4px 0 22px; }
    .hbar .knob { width: 17px; height: 15px; }
    .scale { width: 57px; justify-content: flex-start; gap: 8px; }
    .tools { display: flex; align-items: center; }
    .tools button { width: 21px; height: 17px; }
    .before { flex: 557; } .after { flex: 562; }
    .grip { width: 10px; margin-left: 9px; }
  `];
  render() {
    return html`
      <div class="tabs">
        <div class="tab"><button>${icon("sheet")}F2机电点位图</button></div>
        <div class="tab on"><button>${icon("sheet")}F2</button><button class="x" aria-label="关闭">${icon("close")}</button></div>
        <button class="menu" aria-label="视图列表">${icon("tabMenu")}</button>
      </div>
      <div class="stage">
        <div class="wrap">
          <div class="canvas">
            <svg class="plan">
              <defs><pattern id="hatch" width="36" height="38" patternUnits="userSpaceOnUse"><rect width="36" height="38" fill="#88a4e0"/><path d=${HATCH} stroke="#0038b8" fill="none" shape-rendering="crispEdges"/></pattern></defs>
              <g transform="translate(-222 -170)">
                ${BOXES.map(d => svg`<path d=${d} fill="#fff" stroke="#000"/>`)}
                <path d=${FLOOR} fill="url(#hatch)" stroke="#0038b8"/>
                <path d="M1323.500 625.500v17l4-4 3 6 3-1.500-3-6h5z" fill="#fff" stroke="#222"/>
              </g>
            </svg>
            <div class="badge">临时隐藏/隔离</div>
          </div>
          <div class="nav">
            <button class="end" aria-label="关闭">${icon("navX")}</button>
            <button class="w" aria-label="控制盘">${icon("wheel")}</button>
            <button class="t" aria-label="控制盘菜单">${icon("tri")}</button>
            <hr>
            <button aria-label="缩放">${icon("zoomBox")}</button>
            <button class="t2" aria-label="缩放菜单">${icon("tri")}</button>
            <button class="end b" aria-label="收起">${icon("navM")}</button>
          </div>
        </div>
        <div class="vbar"><button aria-label="向上">${icon("up")}</button><div class="above"></div><div class="knob"></div><div class="below"></div><button aria-label="向下">${icon("down")}</button></div>
      </div>
      <div class="hbar">
        <button class="scale"><span>1</span><span>:</span><span>100</span></button>
        <div class="tools">${["detail", "cube", "sunOff", "shadowOff", "cropOff", "cropShow", "glasses", "bulbSmall", "tempProps", "analytic", "constraints", "left"].map(n => html`<button aria-label=${n}>${icon(n)}</button>`)}</div>
        <div class="before"></div><div class="knob"></div><div class="after"></div>
        <button aria-label="向右">${icon("right")}</button><span class="grip">${icon("grip")}</span>
      </div>`;
  }
}

type Node = { t: string; lv: number; open?: boolean; fill?: boolean; cur?: boolean; last?: boolean };
const leaf = (t: string): Node => ({ t, lv: 2, fill: t !== "F1" && t !== "F2" });
const kids = (names: string[]) => names.map((n, i) => ({ ...leaf(n), last: i === names.length - 1 }));
const TREE: Node[] = [
  { t: "视图 (全部)", lv: 0, open: true },
  { t: "楼层平面", lv: 1, open: true },
  ...kids(["F1", "F1平面布置图", "F2", "F2地坪布置图", "F2完成面尺寸图", "F2平面布置图", "F2机电点位图", "F2立面索引图", "F2隔墙尺寸图"]).map((n, i) => (i === 2 ? { ...n, cur: true } : n)),
  { t: "天花板平面", lv: 1, open: true },
  ...kids(["F1", "F1天花布置图", "F2", "F2天花布置图", "F2灯具布置图", "F2灯控图"]),
  { t: "三维视图", lv: 1, open: false },
  { t: "立面 (单头立面)", lv: 1, open: true },
  ...kids(["04", "05", "06", "07", "08", "09", "10", "11", "12", "13", "14", "15", "16"]),
  { t: "立面 (多头立面)", lv: 1, open: true },
  ...kids(["01", "02", "03", "17", "18", "19"]),
  { t: "剖面 (建筑剖面)", lv: 1, open: true },
];

@customElement("app-browser")
class AppBrowser extends LitElement {
  static styles = [base, css`
    :host { display: flex; flex-direction: column; width: 129px; border-left: 2px solid #cbcbcb; background: #eee; color: #000; overflow: hidden; min-height: 0; }
    .title { height: 20px; line-height: 19px; padding-left: 4px; color: #3c3c3c; flex: none; white-space: nowrap; }
    .tree { flex: 1; min-height: 0; overflow: hidden; background: #fdfdfd; margin: 0; padding: 0; list-style: none; }
    .node { display: flex; height: 20px; align-items: center; white-space: nowrap; }
    .g { width: 20px; height: 20px; flex: none; display: flex; align-items: center; padding-left: 6px;
      --v: repeating-linear-gradient(#a8a090 0 1px, transparent 1px 2px); --h: repeating-linear-gradient(90deg, #a8a090 0 1px, transparent 1px 2px); }
    .line { background: var(--v) 10px 0 / 1px 100% no-repeat; }
    .tee { background: var(--v) 10px 0 / 1px 100% no-repeat, var(--h) 10px 10px / 12px 1px no-repeat; }
    .elbow { background: var(--v) 10px 0 / 1px 50% no-repeat, var(--h) 10px 10px / 12px 1px no-repeat; }
    .root { background: var(--v) 10px 10px / 1px 50% no-repeat, var(--h) 10px 10px / 12px 1px no-repeat; }
    .dash { width: 8px; background: var(--h) 0 10px / 6px 1px no-repeat; padding: 0; }
    .exp { width: 9px; height: 9px; border: 1px solid #8c8c8c; background: #fff; position: relative; }
    .exp::before { content: ""; width: 5px; height: 1px; background: #2a4fa0; }
    .exp.plus::after { content: ""; position: absolute; left: 3px; top: 1px; width: 1px; height: 5px; background: #2a4fa0; }
    .sq { width: 16px; height: 16px; flex: none; margin: 0 3px 4px 2px; border: 1px dashed #444; display: grid; place-items: center; }
    .sq::before { content: ""; width: 12px; height: 12px; border: 1px solid #666; background: #f4f4f4; }
    .sq.fill::before { background: #62aee8; border-color: #4a8cc4; }
    .tx { padding: 0 3px 2px; line-height: 18px; }
    .lv0 .tx { padding-left: 7px; } .lv0 .ic { margin-left: 3px; } .lv1 .tx { padding-left: 0; }
    .cur .tx { background: #e6e6e6; font-weight: 700; }
    .hbar { height: 17px; display: flex; align-items: center; flex: none; }
    .hbar button { width: 19px; height: 15px; }
    .thumb { flex: 1; height: 15px; background: #cbcbcb; }
  `];
  exp(n: Node) { return html`<button class="exp ${n.open ? "" : "plus"}" aria-label="展开或折叠"></button>`; }
  node(n: Node) {
    return html`<li class="node lv${n.lv} ${n.cur ? "cur" : ""}">
      ${n.lv === 0 ? html`<span class="g root">${this.exp(n)}</span>${icon("views")}` : html`<span class="g line"></span>`}
      ${n.lv === 1 ? html`<span class="g tee">${this.exp(n)}</span><span class="g dash"></span>` : nothing}
      ${n.lv === 2 ? html`<span class="g line"></span><span class="g ${n.last ? "elbow" : "tee"}"></span><span class="sq ${n.fill ? "fill" : ""}"></span>` : nothing}
      <span class="tx">${n.t}</span></li>`;
  }
  render() {
    return html`<div class="title">项目浏览器 - 1</div>
      <ul class="tree">${TREE.map(n => this.node(n))}</ul>
      <div class="hbar"><button aria-label="向左">${icon("left")}</button><div class="thumb"></div></div>`;
  }
}

@customElement("app-root")
export class AppRoot extends LitElement {
  static styles = [base, css`
    :host { display: flex; flex-direction: column; height: 100vh; overflow: hidden; background: #cbcbcb; font: 12px/16px "Noto Sans", "Noto Sans CJK SC", sans-serif; color: #222; }
    .main { flex: 1; min-height: 0; display: grid; grid-template-columns: auto 1fr auto; }
    .status { height: 15px; flex: none; overflow: hidden; display: grid; grid-template-columns: 939px 236px 55px 1fr auto; align-items: start; color: #222; }
    .msg { line-height: 24px; white-space: nowrap; text-indent: -5px; overflow: hidden; }
    .part { display: flex; align-items: center; height: 24px; gap: 8px; }
    select { appearance: none; height: 18px; width: 203px; background: #f0f0f0; border: 1px solid #b5b5b5; padding-left: 2px; line-height: 14px; }
    .pick { position: relative; display: flex; }
    .pick .ic { position: absolute; right: 4px; top: 4px; }
    .end span { margin-left: -6px; }
  `];
  render() {
    return html`
      <app-ribbon></app-ribbon>
      <div class="main"><app-properties></app-properties><app-view></app-view><app-browser></app-browser></div>
      <footer class="status">
        <div class="msg">单击可进行选择; 按 Tab 键并单击可选择其他项目; 按 Ctrl 键并单击可将新项目添加到选择集; 按 Shift 键并单击可取消选择</div>
        <div class="part">${icon("worksets")}<span class="pick"><select aria-label="工作集"><option></option></select>${icon("chev")}</span></div>
        <div class="part">${icon("editReq")}<span>:0</span></div>
        <div class="part">${icon("optSheet")}${icon("gear")}<span class="pick"><select aria-label="设计选项"><option>主模型</option></select>${icon("chev")}</span></div>
        <div class="part end">${["link", "selUnder", "selPin", "selFace", "drag", "gear", "filter"].map(n => html`<button aria-label=${n}>${icon(n)}</button>`)}<span>:1</span></div>
      </footer>`;
  }
}
